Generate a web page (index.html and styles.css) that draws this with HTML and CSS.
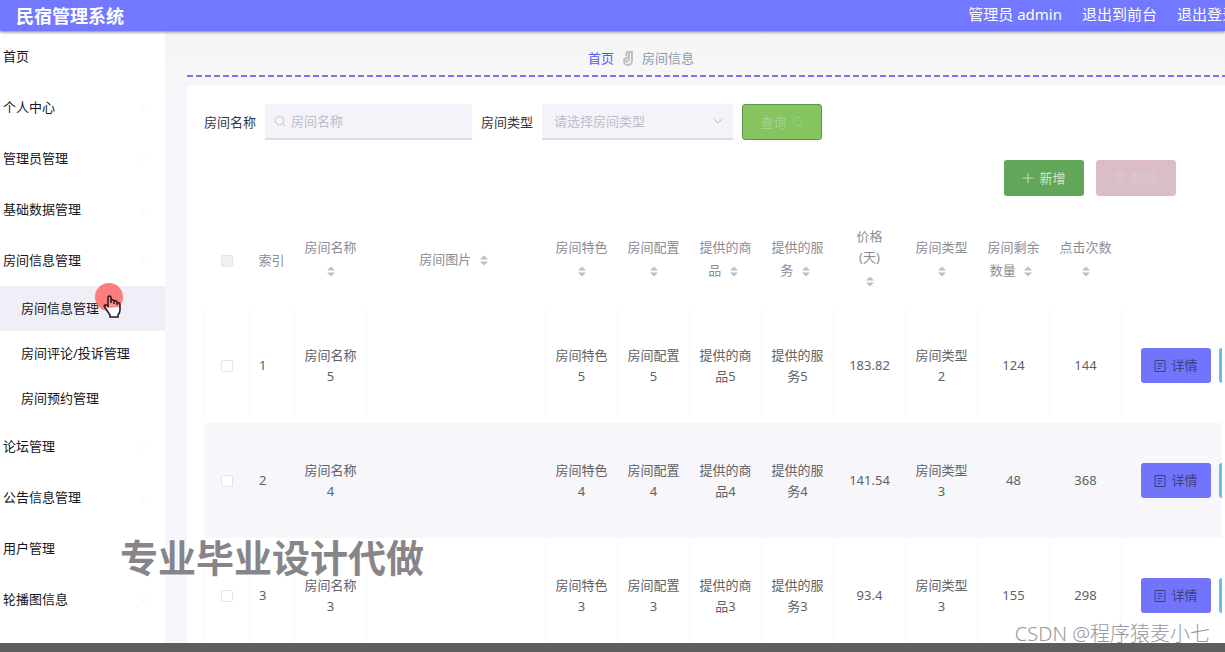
FILE: index.html
```html
<!DOCTYPE html>
<html lang="zh-CN">
<head>
<meta charset="utf-8">
<meta name="viewport" content="width=device-width, initial-scale=1">
<title>民宿管理系统</title>
<link rel="stylesheet" href="styles.css">
</head>
<body class="page">
<svg class="defs" aria-hidden="true">
  <symbol id="sort" viewBox="0 0 10 12"><path d="M5 1 9 5H1zM1 7h8L5 11z" fill="currentColor"/></symbol>
  <symbol id="chevron" viewBox="0 0 12 12"><path d="M2 4l4 4 4-4" fill="none" stroke="currentColor"/></symbol>
  <symbol id="search" viewBox="0 0 14 14"><path d="M6.500 1.500a5 5 0 1 0 0 10 5 5 0 0 0 0-10zM10 10l3 3" fill="none" stroke="currentColor"/></symbol>
  <symbol id="doc" viewBox="0 0 12 14"><path d="M1 1.500h10v11H1zM3.500 4.500h5M3.500 7h5M3.500 9.500h3" fill="none" stroke="currentColor"/></symbol>
</svg>
<header class="topbar">
  <h1 class="brand">民宿管理系统</h1>
  <nav class="account">
    <span>管理员 admin</span>
    <a href="#front">退出到前台</a>
    <a href="#logout">退出登录</a>
  </nav>
</header>
<div class="body">
  <nav class="menu">
    <a class="item" href="#home">首页</a>
    <a class="item" href="#me">个人中心<svg class="arrow"><use href="#chevron"/></svg></a>
    <a class="item" href="#admins">管理员管理<svg class="arrow"><use href="#chevron"/></svg></a>
    <a class="item" href="#base">基础数据管理<svg class="arrow"><use href="#chevron"/></svg></a>
    <a class="item" href="#rooms">房间信息管理<svg class="arrow"><use href="#chevron"/></svg></a>
    <a class="subitem active" href="#room-info">房间信息管理</a>
    <a class="subitem" href="#room-comments">房间评论/投诉管理</a>
    <a class="subitem" href="#room-orders">房间预约管理</a>
    <a class="item" href="#forum">论坛管理<svg class="arrow"><use href="#chevron"/></svg></a>
    <a class="item" href="#notices">公告信息管理<svg class="arrow"><use href="#chevron"/></svg></a>
    <a class="item" href="#users">用户管理<svg class="arrow"><use href="#chevron"/></svg></a>
    <a class="item" href="#banners">轮播图信息<svg class="arrow"><use href="#chevron"/></svg></a>
  </nav>
  <main class="content">
    <div class="crumbs">
      <a class="crumb-home" href="#home">首页</a>
      <svg class="crumb-icon" viewBox="0 0 12 16"><path d="M4 6 5 2h5v9a4 4 0 0 1-8 0c0-3 5-5 5-2s-3 3-3 1M7 3v5" fill="none" stroke="currentColor" stroke-width="2"/></svg>
      <span>房间信息</span>
    </div>
    <section class="card">
      <form class="filters">
        <label for="name">房间名称</label>
        <div class="field field-name"><svg class="field-icon"><use href="#search"/></svg><input id="name" type="text" placeholder="房间名称"></div>
        <label for="type">房间类型</label>
        <div class="field field-type"><select id="type"><option>请选择房间类型</option></select><svg class="field-arrow"><use href="#chevron"/></svg></div>
        <button class="btn btn-search" type="button">查询<svg class="btn-icon"><use href="#search"/></svg></button>
      </form>
      <div class="actions">
        <button class="btn btn-add" type="button"><svg class="btn-icon" viewBox="0 0 14 14"><path d="M7 1v12M1 7h12" stroke="currentColor"/></svg>新增</button>
        <button class="btn btn-delete" type="button" disabled><svg class="btn-icon" viewBox="0 0 14 14"><path d="M1 3.500h12M5 3V1h4v2M3 4v9h8V4M6 6v4M8 6v4" fill="none" stroke="currentColor"/></svg>删除</button>
      </div>
      <div class="table-wrap">
        <table class="rooms">
          <colgroup><col class="col-tick"><col class="col-index"><col class="col-text"><col class="col-image"><col class="col-text" span="8"><col></colgroup>
          <thead>
            <tr>
              <th><input class="tick tick-all" type="checkbox" aria-label="全选"></th>
              <th class="index">索引</th>
              <th>房间名称 <svg class="sort"><use href="#sort"/></svg></th>
              <th>房间图片 <svg class="sort"><use href="#sort"/></svg></th>
              <th>房间特色 <svg class="sort"><use href="#sort"/></svg></th>
              <th>房间配置 <svg class="sort"><use href="#sort"/></svg></th>
              <th>提供的商品 <svg class="sort"><use href="#sort"/></svg></th>
              <th>提供的服务 <svg class="sort"><use href="#sort"/></svg></th>
              <th>价格<br>(天)<br><svg class="sort"><use href="#sort"/></svg></th>
              <th>房间类型 <svg class="sort"><use href="#sort"/></svg></th>
              <th>房间剩余数量 <svg class="sort"><use href="#sort"/></svg></th>
              <th>点击次数 <svg class="sort"><use href="#sort"/></svg></th>
              <th></th>
            </tr>
          </thead>
          <tbody>
            <tr>
              <td><input class="tick" type="checkbox" aria-label="选择第1行"></td><td class="index">1</td><td>房间名称5</td><td></td><td>房间特色5</td><td>房间配置5</td><td>提供的商品5</td><td>提供的服务5</td><td>183.82</td><td>房间类型2</td><td>124</td><td>144</td>
              <td class="ops"><div class="ops-row"><button class="btn btn-detail" type="button"><svg class="doc"><use href="#doc"/></svg>详情</button><button class="btn btn-edit" type="button" aria-label="修改"></button></div></td>
            </tr>
            <tr class="striped">
              <td><input class="tick" type="checkbox" aria-label="选择第2行"></td><td class="index">2</td><td>房间名称4</td><td></td><td>房间特色4</td><td>房间配置4</td><td>提供的商品4</td><td>提供的服务4</td><td>141.54</td><td>房间类型3</td><td>48</td><td>368</td>
              <td class="ops"><div class="ops-row"><button class="btn btn-detail" type="button"><svg class="doc"><use href="#doc"/></svg>详情</button><button class="btn btn-edit" type="button" aria-label="修改"></button></div></td>
            </tr>
            <tr>
              <td><input class="tick" type="checkbox" aria-label="选择第3行"></td><td class="index">3</td><td>房间名称3</td><td></td><td>房间特色3</td><td>房间配置3</td><td>提供的商品3</td><td>提供的服务3</td><td>93.4</td><td>房间类型3</td><td>155</td><td>298</td>
              <td class="ops"><div class="ops-row"><button class="btn btn-detail" type="button"><svg class="doc"><use href="#doc"/></svg>详情</button><button class="btn btn-edit" type="button" aria-label="修改"></button></div></td>
            </tr>
          </tbody>
        </table>
      </div>
    </section>
  </main>
</div>
<div class="bottom-bar"></div>
<div class="caption">专业毕业设计代做</div>
<div class="credit">CSDN @程序猿麦小七</div>
<svg class="pointer" viewBox="0 0 30 38" aria-hidden="true">
  <circle cx="15" cy="15" r="14" fill="#ff7c7c"/>
  <path d="M14 24V15q1-2 3 0v6-3q2-1 3 1v2-2q2-1 3 1v2-1q3-1 3 2v5q0 3-2 5v2h-8v-2l-4-6q-3-4-1-4 2 0 3 1z" fill="#ff8f8a"/>
  <path d="M11 25l3 1 12-1v3q0 3-2 5v2h-8v-2l-4-5z" fill="#fff"/>
  <path d="M14 25V15q1-2 3 0v6-3q2-1 3 1v3-3q2-1 3 1v3-2q3-1 3 2v5q0 3-2 5v2h-8v-2l-4-6q-3-4-1-4 2 0 3 1z" fill="none" stroke="#2a1518" stroke-width="1.500"/>
</svg>
</body>
</html>
```
FILE: styles.css
```css
* { box-sizing: border-box; }

.page {
  position: relative;
  display: grid;
  grid-template-rows: auto minmax(0, 1fr) auto;
  height: 100vh;
  margin: 0;
  overflow: hidden;
  background: #f7f7fb;
  color: #606266;
  font: 13px/21px "Noto Sans", "Noto Sans CJK SC", sans-serif;
}

.defs { position: absolute; width: 0; height: 0; }
a { color: inherit; text-decoration: none; }
button, input, select { font: inherit; }

.topbar {
  z-index: 1;
  display: flex;
  justify-content: space-between;
  align-items: center;
  height: 31px;
  padding-left: 16px;
  background: #7278ff;
  box-shadow: 0 1px 3px #6f7c70;
  color: #fff;
}
.brand { margin: 0; font-size: 18px; line-height: 28px; }
.account {
  display: flex;
  gap: 20px;
  margin-right: -12px;
  padding-bottom: 3px;
  font-size: 15px;
  line-height: 24px;
  white-space: nowrap;
}

.body {
  display: grid;
  grid-template-columns: 165px minmax(0, 1fr);
  min-height: 0;
  overflow: hidden;
}
.menu { background: #fff; color: #16161c; }
.item {
  display: flex;
  align-items: center;
  justify-content: space-between;
  height: 51px;
  padding: 0 17px 0 3px;
}
.arrow { width: 10px; height: 10px; color: #ededf3; }
.subitem {
  display: flex;
  align-items: center;
  height: 45px;
  padding-left: 21px;
}
.active { background: #f0eff8; }

.content {
  min-width: 0;
  padding-left: 22px;
  background: linear-gradient(#f5f5f5, #f7f7fb 60px);
}
.crumbs {
  display: flex;
  align-items: center;
  justify-content: center;
  gap: 8px;
  height: 46px;
  padding: 8px 130px 0 0;
  background: repeating-linear-gradient(90deg, #7a74f0 0 6px, transparent 6px 9px) left bottom / 100% 2px no-repeat;
  color: #909cac;
}
.crumb-home { color: #5a58f0; }
.crumb-icon { width: 12px; height: 16px; color: #bfc0c4; }

.card {
  margin-top: 9px;
  padding: 18px 3px 0 17px;
  background: #fff;
}
.filters { display: flex; align-items: center; color: #35363c; }
.filters label { white-space: nowrap; }
.field {
  display: flex;
  align-items: center;
  height: 36px;
  margin: 0 9px;
  background: #f4f3fa;
  border-bottom: 2px solid #dddce4;
  color: #bcbdca;
}
.field-name { width: 207px; padding-left: 9px; }
.field-type { width: 191px; padding-right: 9px; }
.field input, .field select {
  width: 100%;
  min-width: 0;
  border: 0;
  outline: 0;
  background: transparent;
  color: #bcbdca;
  appearance: none;
}
.field input { padding: 0 5px; }
.field select { padding: 0 12px; }
.field input::placeholder { color: #bcbdca; opacity: 1; }
.field-icon { flex: none; width: 12px; height: 12px; }
.field-arrow { flex: none; width: 12px; height: 12px; }

.btn {
  display: flex;
  align-items: center;
  justify-content: center;
  flex: none;
  gap: 5px;
  width: 80px;
  height: 36px;
  padding: 0;
  border: 0;
  border-radius: 3px;
  white-space: nowrap;
}
.btn-icon { width: 12px; height: 12px; }
.btn-search { border: 1px solid #5f9347; background: #85c45e; color: #a3d390; }
.actions {
  display: flex;
  justify-content: flex-end;
  gap: 12px;
  padding: 20px 46px 17px 0;
}
.btn-add { background: #62a65a; color: #d5e8cf; }
.btn-delete { background: #d9bec6; border: 1px solid #e0b9c3; color: #dfc9cf; }

.table-wrap { overflow: hidden; }
.rooms {
  width: 100%;
  table-layout: fixed;
  border-collapse: collapse;
  text-align: center;
}
.col-tick, .col-index { width: 45px; }
.col-text { width: 72px; }
.col-image { width: 179px; }
.rooms th { height: 95px; padding: 0 9px; color: #8b8d95; font-weight: 400; }
.rooms td { height: 115px; padding: 0 9px; border-left: 1px solid #fafafd; }
.rooms .index { padding: 0; padding-left: 9px; text-align: left; }
.striped { background: #f6f6fb; }
.sort { width: 10px; height: 27px; margin: 0 4px; vertical-align: middle; color: #bdbfc7; }
.tick {
  appearance: none;
  display: block;
  width: 12px;
  height: 12px;
  margin: 0 auto;
  border: 1px solid #e4e4ec;
  border-radius: 2px;
  background: #fff;
}
.tick-all { background: #f0f0f5; }
.rooms .ops { padding: 0 0 0 19px; }
.ops-row { display: flex; gap: 8px; }
.btn-detail { width: 70px; height: 35px; background: #7274fb; color: #3f3f7c; }
.btn-edit { height: 35px; background: #66bdf0; }
.doc { width: 12px; height: 14px; }

.bottom-bar { height: 9px; background: #5e5e5e; }

.caption {
  position: absolute;
  left: 120px;
  top: 530px;
  color: #878589;
  font-size: 38px;
  font-weight: 700;
  line-height: 54px;
  text-shadow: 0 0 2px #fff, 1px 1px 1px #fff, -1px -1px 1px #fff;
  white-space: nowrap;
}
.credit {
  position: absolute;
  right: 15px;
  bottom: 4px;
  color: #97979b;
  font-size: 20px;
  font-weight: 300;
  line-height: 28px;
  white-space: nowrap;
}
.pointer { position: absolute; left: 94px; top: 282px; width: 30px; height: 38px; }
```
